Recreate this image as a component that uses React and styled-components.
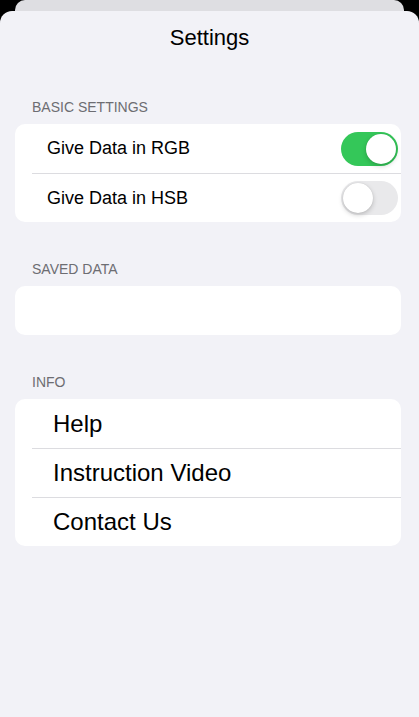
import React from 'react';
import styled, { createGlobalStyle } from 'styled-components';

const GlobalStyle = createGlobalStyle`
  html, body {
    margin: 0;
    padding: 0;
    background: #000;
  }
  body {
    font-family: "Liberation Sans", Arial, sans-serif;
    -webkit-font-smoothing: antialiased;
  }
`;

const App = () => {
  return (
    <>
      <GlobalStyle />
      <Screen>
        <BackCard />
        <Sheet>
          <Title>Settings</Title>

          <SectionLabel first>BASIC SETTINGS</SectionLabel>
          <Group>
            <ToggleRow>
              <RowText>Give Data in RGB</RowText>
              <Toggle on />
            </ToggleRow>
            <ToggleRow>
              <RowText>Give Data in HSB</RowText>
              <Toggle />
            </ToggleRow>
          </Group>

          <SectionLabel>SAVED DATA</SectionLabel>
          <Group>
            <EmptyRow />
          </Group>

          <SectionLabel>INFO</SectionLabel>
          <Group>
            <LinkRow>Help</LinkRow>
            <LinkRow>Instruction Video</LinkRow>
            <LinkRow>Contact Us</LinkRow>
          </Group>
        </Sheet>
      </Screen>
    </>
  );
};

export default App;

const Screen = styled.div`
  width: 419px;
  height: 717px;
  background: #000;
  display: flex;
  flex-direction: column;
  overflow: hidden;
`;

const BackCard = styled.div`
  margin: 0 15px;
  height: 12px;
  background: #dedee2;
  border-radius: 10px 10px 0 0;
  flex-shrink: 0;
`;

const Sheet = styled.div`
  flex: 1;
  margin-top: -1px;
  background: #f2f2f7;
  border-radius: 12px 12px 0 0;
  padding: 0 18px 0 15px;
  display: flex;
  flex-direction: column;
`;

const Title = styled.div`
  text-align: center;
  font-size: 22px;
  color: #000;
  padding-top: 15px;
  height: 44px;
  margin-left: 3px;
  line-height: 24px;
  box-sizing: border-box;
`;

const SectionLabel = styled.div`
  font-size: 14px;
  color: #6d6d72;
  padding: 0 0 9px 17px;
  margin-top: ${(p) => (p.first ? '44px' : '39px')};
  line-height: 16px;
`;

const Group = styled.div`
  background: #fff;
  border-radius: 10px;
  overflow: hidden;
`;

const ToggleRow = styled.div`
  height: 49px;
  display: flex;
  align-items: center;
  justify-content: space-between;
  margin-left: 17px;
  padding-right: 3px;
  box-sizing: border-box;
  & + & {
    border-top: 1px solid #dcdce0;
  }
`;

const RowText = styled.span`
  font-size: 18px;
  color: #000;
  padding-left: 15px;
`;

const Toggle = styled.div`
  width: 57px;
  height: 34px;
  border-radius: 17px;
  background: ${(p) => (p.on ? '#34c759' : '#e9e9eb')};
  position: relative;
  flex-shrink: 0;
  &::after {
    content: '';
    position: absolute;
    top: 2px;
    left: ${(p) => (p.on ? '25px' : '2px')};
    width: 30px;
    height: 30px;
    border-radius: 50%;
    background: #fff;
    box-shadow: 0 2px 5px rgba(0, 0, 0, 0.2), 0 0 1px rgba(0, 0, 0, 0.15);
  }
`;

const EmptyRow = styled.div`
  height: 49px;
`;

const LinkRow = styled.div`
  height: 49px;
  display: flex;
  align-items: center;
  margin-left: 17px;
  padding-left: 21px;
  font-size: 24px;
  color: #000;
  box-sizing: border-box;
  & + & {
    border-top: 1px solid #dcdce0;
  }
`;
